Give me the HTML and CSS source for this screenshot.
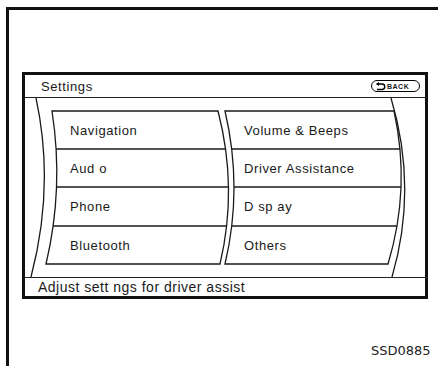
FILE: index.html
```html
<!DOCTYPE html>
<html lang="en">
<head>
  <meta charset="UTF-8" />
  <meta name="viewport" content="width=device-width, initial-scale=1" />
  <title>Settings - SSD0885</title>
  <link rel="stylesheet" href="styles.css">
</head>
<body>
  <div class="sheet">
    <div class="screen">
      <div class="title-bar">
        <span class="title">Settings</span>
        <span class="back-btn">
          <svg class="back-icon" width="11" height="9" viewBox="0 0 11 9">
            <path d="M3.5 2 H7 A2.5 2.5 0 0 1 7 7.5 H2" fill="none" stroke="#000" stroke-width="1.4"/>
            <path d="M0.8 2 L4 0 L4 4 Z" fill="#000"/>
          </svg>
          BACK
        </span>
      </div>

      <div class="menu">
        <svg class="menu-lines" width="400" height="179" viewBox="0 0 400 179">
          <g fill="none" stroke="#1a1a1a" stroke-width="1.3">
            <!-- outer curves -->
            <path d="M11 0 Q30 88 6 179" />
            <path d="M366 0 Q393 90 367 179" />
            <!-- left block -->
            <path d="M27 13 L193 13 Q213 90 195 166 L21 166 Q39 90 27 13 Z" />
            <path d="M31 51 H200" />
            <path d="M31.5 89 H203.5" />
            <path d="M28 128 H201.5" />
            <!-- right block -->
            <path d="M200 13 L369 13 Q386 90 363 166 L200 166 Q218 90 200 13 Z" />
            <path d="M206.5 51 H375" />
            <path d="M209 89 H376" />
            <path d="M206.5 128 H372" />
          </g>
        </svg>
        <div class="menu-grid">
          <div class="item">Navigation</div>
          <div class="item">Volume &amp; Beeps</div>
          <div class="item">Aud o</div>
          <div class="item">Driver Assistance</div>
          <div class="item">Phone</div>
          <div class="item">D sp ay</div>
          <div class="item">Bluetooth</div>
          <div class="item">Others</div>
        </div>
      </div>

      <div class="status-bar">Adjust sett ngs for driver assist</div>
    </div>

    <div class="code">SSD0885</div>
  </div>
</body>
</html>
```

FILE: styles.css
```css
body {
  margin: 0;
  background: #fff;
  font-family: "Liberation Sans", Arial, sans-serif;
  color: #1a1a1a;
  overflow: hidden;
}
.sheet {
  margin: 7px 0 0 6px;
  border-top: 3px solid #111;
  border-left: 3px solid #111;
  height: calc(100vh - 7px);
  padding: 62px 0 0 13px;
  box-sizing: border-box;
}
.screen {
  width: 406px;
  height: 227px;
  border: 3px solid #111;
  box-sizing: border-box;
  display: flex;
  flex-direction: column;
}
.title-bar {
  height: 22px;
  border-bottom: 1px solid #222;
  display: flex;
  align-items: center;
  justify-content: space-between;
  padding: 0 5px 0 16px;
}
.title {
  font-size: 13px;
  letter-spacing: 0.6px;
}
.back-btn {
  display: flex;
  align-items: center;
  gap: 1px;
  height: 12px;
  width: 49px;
  box-sizing: border-box;
  border: 1.5px solid #000;
  border-radius: 7px;
  padding: 0 3px 0 3px;
  font-size: 7px;
  font-weight: bold;
  letter-spacing: 0.5px;
}
.back-icon {
  display: block;
}
.menu {
  position: relative;
  height: 179px;
  border-bottom: 1px solid #222;
}
.menu-lines {
  position: absolute;
  left: 0;
  top: 0;
}
.menu-grid {
  display: grid;
  grid-template-columns: 174px 1fr;
  grid-template-rows: repeat(4, 38.3px);
  padding: 13px 0 0 45px;
}
.item {
  display: flex;
  align-items: center;
  font-size: 13px;
  letter-spacing: 0.6px;
}
.status-bar {
  height: 18px;
  display: flex;
  align-items: center;
  padding-left: 13px;
  font-size: 14px;
  letter-spacing: 0.5px;
}
.code {
  margin: 44px 0 0 349px;
  font-family: "DejaVu Sans", sans-serif;
  font-size: 13px;
  color: #222;
}
```
